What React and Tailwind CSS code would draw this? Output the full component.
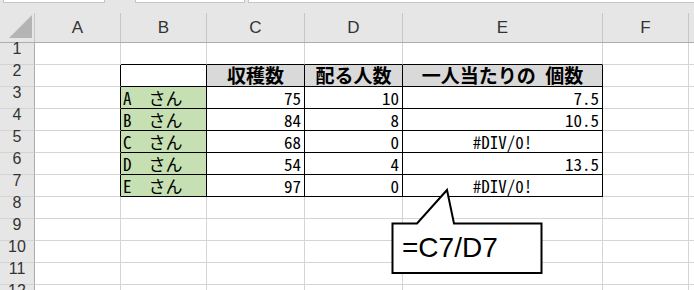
import React from 'react';

// 列幅（右の罫線込み）
const COLUMNS = [
  { key: 'A', w: 'w-[86px]' },
  { key: 'B', w: 'w-[86px]' },
  { key: 'C', w: 'w-[98px]' },
  { key: 'D', w: 'w-[98px]' },
  { key: 'E', w: 'w-[200px]' },
  { key: 'F', w: 'w-[86px]' },
  { key: 'G', w: 'flex-1' },
];

const people = [
  { name: 'A', harvest: 75, count: 10, each: '7.5' },
  { name: 'B', harvest: 84, count: 8, each: '10.5' },
  { name: 'C', harvest: 68, count: 0, each: '#DIV/0!' },
  { name: 'D', harvest: 54, count: 4, each: '13.5' },
  { name: 'E', harvest: 97, count: 0, each: '#DIV/0!' },
];

const TABLE_COLS = ['B', 'C', 'D', 'E'];
const cellFont = { fontFamily: "'Noto Sans Mono CJK JP', 'Noto Sans CJK JP', monospace" };

// セルの中身と罫線の色を決める
const getCell = (row, col) => {
  const inTable = row >= 2 && row <= 7 && TABLE_COLS.includes(col);
  const rightBlack = inTable || (col === 'A' && row >= 2 && row <= 7);
  const bottomBlack = inTable || (row === 1 && TABLE_COLS.includes(col));
  let content = null;
  let kind = 'text';
  let bg = 'bg-white';

  if (row === 2) {
    if (col === 'C') content = '収穫数';
    if (col === 'D') content = '配る人数';
    if (col === 'E') content = '一人当たりの 個数';
    if (col !== 'B' && inTable) bg = 'bg-[#d9d9d9]';
    kind = 'head';
  } else if (row >= 3 && row <= 7) {
    const p = people[row - 3];
    if (col === 'B') {
      bg = 'bg-[#c6e0b4]';
      kind = 'name';
      content = p.name;
    }
    if (col === 'C') { content = p.harvest; kind = 'num'; }
    if (col === 'D') { content = p.count; kind = 'num'; }
    if (col === 'E') {
      content = p.each;
      kind = p.each.startsWith('#') ? 'error' : 'num';
    }
  }
  return { content, kind, bg, rightBlack, bottomBlack };
};

const Cell = ({ row, col }) => {
  const { content, kind, bg, rightBlack, bottomBlack } = getCell(row, col.key);
  const right = col.key === 'G' ? '' : rightBlack ? 'border-r border-r-black' : 'border-r border-r-[#d4d4d4]';
  const bottom = bottomBlack ? 'border-b border-b-black' : 'border-b border-b-[#d4d4d4]';

  let inner = null;
  if (kind === 'head' && content) {
    inner = (
      <div className="w-full text-center text-[19px] leading-[20px] font-bold pb-[1px] text-black" style={cellFont}>
        {content}
      </div>
    );
  } else if (kind === 'name') {
    inner = (
      <div className="w-full pl-[2px] text-[17px] leading-[20px] text-black whitespace-pre" style={cellFont}>
        {content}　さん
      </div>
    );
  } else if (kind === 'num') {
    inner = (
      <div className="w-full text-right pr-[3px] text-[17px] leading-[20px] text-black" style={cellFont}>
        {content}
      </div>
    );
  } else if (kind === 'error') {
    inner = (
      <div className="w-full text-center text-[17px] leading-[20px] text-black" style={cellFont}>
        {content}
      </div>
    );
  }

  return (
    <div className={`${col.w} h-full flex items-end shrink-0 ${bg} ${right} ${bottom}`}>
      {inner}
    </div>
  );
};

const App = () => {
  const rows = Array.from({ length: 12 }, (_, i) => i + 1);

  return (
    <div className="w-[694px] h-[290px] bg-white relative overflow-hidden" style={{ fontFamily: "'Liberation Sans', Arial, sans-serif" }}>
      {/* 数式バーの下端 */}
      <div className="h-[13px] bg-[#e6e6e6] flex items-start">
        <div className="ml-[3px] w-[102px] h-[3px] bg-white border-x border-b border-[#c6c6c6]" />
        <div className="ml-[30px] w-[110px] h-[3px] bg-white border-x border-b border-[#c6c6c6]" />
        <div className="ml-[3px] flex-1 h-[3px] bg-white border-l border-b border-[#c6c6c6]" />
      </div>

      {/* 列見出し（G列は画面の端で見出しが切れる） */}
      <div className="flex h-[30px] bg-[#e6e6e6] border-b border-[#acacac]">
        <div className="w-[35px] shrink-0 h-full border-r border-[#c6c6c6]">
          <svg width="34" height="29" viewBox="0 0 34 29">
            <polygon points="9,25 32,2 32,25" fill="#b4b4b4" />
          </svg>
        </div>
        {COLUMNS.map((c) => (
          <div
            key={c.key}
            className={`${c.w} shrink-0 h-full text-center text-[17px] leading-[29px] text-[#333] ${c.key === 'G' ? '' : 'border-r border-[#c6c6c6]'}`}
          >
            {c.key === 'G' ? '' : c.key}
          </div>
        ))}
      </div>

      {/* 行 */}
      {rows.map((r) => (
        <div key={r} className="flex h-[22px]">
          <div className="w-[35px] shrink-0 h-full bg-[#e6e6e6] border-r border-r-[#acacac] border-b border-b-[#d4d4d4] text-center text-[16px] leading-[12px] text-[#333]">
            {r}
          </div>
          {COLUMNS.map((c) => (
            <Cell key={c.key} row={r} col={c} />
          ))}
        </div>
      ))}

      {/* 吹き出し */}
      <svg className="absolute left-0 top-0" width="694" height="290" viewBox="0 0 694 290">
        <path
          d="M392.5 223.5 L417 223.5 L447 190 L454 223.5 L541.5 223.5 L541.5 273 L392.5 273 Z"
          fill="#ffffff"
          stroke="#000000"
          strokeWidth="2"
          strokeLinejoin="miter"
        />
      </svg>
      <div className="absolute left-[402px] top-[234px] text-[28px] leading-[28px] text-black">
        =C7/D7
      </div>
    </div>
  );
};

export default App;
